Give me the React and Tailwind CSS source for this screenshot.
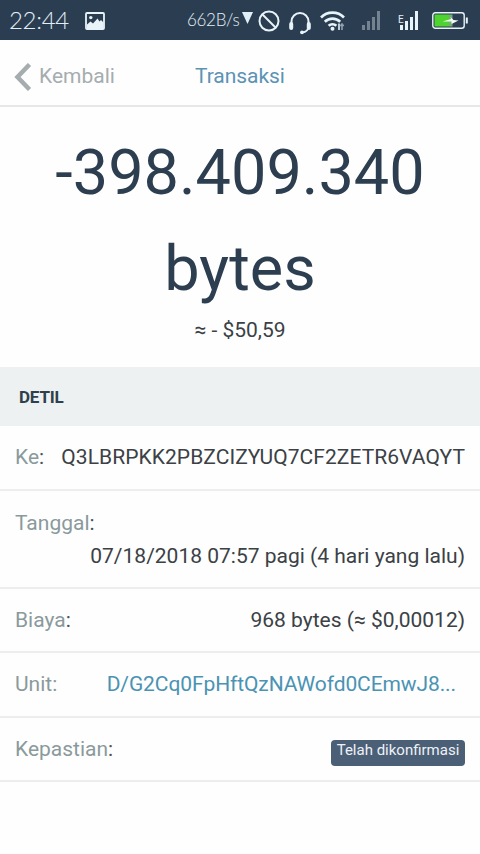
import clsx from 'clsx'

export default function App() {
    return (
        <div className="w-[480px] h-[854px] overflow-hidden bg-[#fefefe] font-[Roboto,sans-serif] text-[#3b4145]">
            <StatusBar />

            <header className="flex h-[67px] items-center border-b-2 border-[#e6e8e8] pl-[14px] pt-[8px]">
                <button className="flex w-[181px] items-center text-[21px] text-[#a5adaf]">
                    <ChevronIcon />
                    <span className="ml-[7px]">Kembali</span>
                </button>
                <h1 className="text-[21px] tracking-[-0.05px] text-[#5b93b5]">Transaksi</h1>
            </header>

            <section className="flex h-[260px] flex-col items-center pt-[18px] text-[#2c3e50]">
                <div className="text-center text-[63px] leading-[96px]">
                    <p>-398.409.340</p>
                    <p>bytes</p>
                </div>
                <p className="text-[21px] leading-[27px] text-[#3b4145]">≈ - $50,59</p>
            </section>

            <h2 className="flex h-[59px] items-center bg-[#edf1f1] pl-[19px] pt-[3px] text-[17px] font-bold tracking-[-0.2px] text-[#2f3f4c]">
                DETIL
            </h2>

            <DetailRow label="Ke" className="h-[65px]">
                <span className="tracking-[0.06px]">Q3LBRPKK2PBZCIZYUQ7CF2ZETR6VAQYT</span>
            </DetailRow>

            <div className="h-[98px] border-b-2 border-[#eceeee] px-[15px] pt-[16px] text-[21px] leading-[33px]">
                <Label>Tanggal</Label>
                <p className="text-right">07/18/2018 07:57 pagi (4 hari yang lalu)</p>
            </div>

            <DetailRow label="Biaya" className="h-[64px]">
                968 bytes (≈ $0,00012)
            </DetailRow>

            <DetailRow label="Unit" className="h-[65px]" muted>
                <span className="mr-[9px] tracking-[-0.1px] text-[#4a93b3]">D/G2Cq0FpHftQzNAWofd0CEmwJ8...</span>
            </DetailRow>

            <DetailRow label="Kepastian" className="h-[64px]">
                <span className="mt-[7px] block h-[26px] w-[134px] rounded-[4px] bg-[#4b5f77] text-center text-[15px] leading-[21px] text-[#eef2f6]">
                    Telah dikonfirmasi
                </span>
            </DetailRow>
        </div>
    )
}

function Label({ children, muted }) {
    return (
        <span className="text-[#8a9a9c]">
            {children}
            <span className={clsx(!muted && 'text-[#4b5154]')}>:</span>
        </span>
    )
}

function DetailRow({ label, className, muted, children }) {
    return (
        <div
            className={clsx(
                'flex items-center justify-between whitespace-nowrap border-b-2 border-[#eceeee] px-[15px] pt-px text-[21px]',
                className
            )}
        >
            <Label muted={muted}>{label}</Label>
            <span>{children}</span>
        </div>
    )
}

function StatusBar() {
    return (
        <div className="flex h-10 items-center bg-[#2b3e51] pl-[9px] font-[Lato,sans-serif] text-[#e3eff7]">
            <span className="w-[76px] text-[24px] font-light tracking-[-0.3px]">22:44</span>
            <PictureIcon />
            <span className="ml-[82px] w-[54px] text-[17px] font-light tracking-[-0.3px] whitespace-nowrap">662B/s</span>
            <svg width="11" height="12" viewBox="0 0 11 12" className="mb-1 ml-px" fill="#e3eff7">
                <path d="M0 0h11L5.5 12z" />
            </svg>
            <BlockedIcon />
            <HeadsetIcon />
            <WifiIcon />
            <SignalIcon />
            <EdgeSignalIcon />
            <BatteryIcon />
        </div>
    )
}

function ChevronIcon() {
    return (
        <svg width="18" height="28" viewBox="0 0 18 28" fill="none" stroke="#a5adaf" strokeWidth="4.5">
            <path d="M15.500 1.500L3.500 14l12 12.500" />
        </svg>
    )
}

function PictureIcon() {
    return (
        <svg width="20" height="18" viewBox="0 0 20 18" className="mt-px">
            <rect x="1" y="1" width="18" height="16" rx="1" fill="none" stroke="#e9f3fa" strokeWidth="1.8" />
            <circle cx="5.8" cy="5.6" r="1.7" fill="#e9f3fa" />
            <path d="M2 16v-3.5l3.5-3 2.5 2 4.5-5 2 3 1.5-1.5 2.5 2.5V16z" fill="#e9f3fa" />
        </svg>
    )
}

function BlockedIcon() {
    return (
        <svg width="22" height="22" viewBox="0 0 22 22" className="mt-px ml-[5px]" fill="none" stroke="#e9f3fa" strokeWidth="2">
            <circle cx="11" cy="11" r="9.5" />
            <path d="M4.5 4.5l13 13" />
        </svg>
    )
}

function HeadsetIcon() {
    return (
        <svg width="24" height="24" viewBox="0 0 24 24" className="mt-[5px] ml-[8px]" fill="none" stroke="#e9f3fa">
            <path d="M3.5 14v-3.5a8.5 8.5 0 0 1 17 0V14" strokeWidth="2" />
            <path d="M20.5 15c0 4-2 6-6.5 6.5" strokeWidth="1.8" />
            <path d="M3.2 13v4M20.8 13v4" strokeWidth="4" strokeLinecap="round" />
            <circle cx="14" cy="21.3" r="1.9" fill="#e9f3fa" stroke="none" />
        </svg>
    )
}

function WifiIcon() {
    return (
        <svg width="26" height="20" viewBox="0 0 26 20" className="mt-[2px] ml-[8px]" fill="none" stroke="#e9f3fa">
            <path d="M1 6.5a16 16 0 0 1 23 0M4.8 10.8a11 11 0 0 1 15.4 0M8.6 14.8a5.8 5.8 0 0 1 7.8 0" strokeWidth="2.6" />
            <circle cx="12.5" cy="17.8" r="2" fill="#e9f3fa" stroke="none" />
            <path d="M19 12.500v6.500" strokeWidth="1.600" />
            <path d="M22 13v6M20.300 15l1.700-2 1.700 2" stroke="#8fa0ae" strokeWidth="1.600" />
        </svg>
    )
}

function SignalIcon() {
    return (
        <svg width="18" height="19" viewBox="0 0 18 19" className="mt-px ml-[16px]" fill="#74838f">
            <path d="M0 14h3v5H0zM5 10h3v9H5zM10 6h3v13h-3zM15 0h3v19h-3z" />
        </svg>
    )
}

function EdgeSignalIcon() {
    return (
        <div className="relative ml-[20px]">
            <svg width="18" height="19" viewBox="0 0 18 19" className="mt-px" fill="#e9f3fa">
                <path d="M0 14h3v5H0zM5 10h3v9H5zM10 6h3v13h-3zM15 0h3v19h-3z" />
            </svg>
            <span className="absolute -left-[2px] top-[5px] font-[Roboto,sans-serif] text-[10px] leading-[10px]">E</span>
        </div>
    )
}

function BatteryIcon() {
    return (
        <svg width="36" height="17" viewBox="0 0 36 17" className="mt-px ml-[14px]">
            <defs>
                <linearGradient id="charge">
                    <stop offset="0.7" stopColor="#4fd32e" />
                    <stop offset="1" stopColor="#7f9b8c" />
                </linearGradient>
            </defs>
            <rect x="0.8" y="0.8" width="31.4" height="15.4" rx="2.5" fill="none" stroke="#e9f3fa" strokeWidth="1.4" />
            <rect x="2.5" y="2.5" width="18" height="12" fill="url(#charge)" />
            <path d="M10.5 9.500L19 7l-.5-2 3 3 5 .5-7 3.500 0-2.500z" fill="#f1faf5" />
            <path d="M34.8 5.5v6" stroke="#e9f3fa" strokeWidth="2" />
        </svg>
    )
}
